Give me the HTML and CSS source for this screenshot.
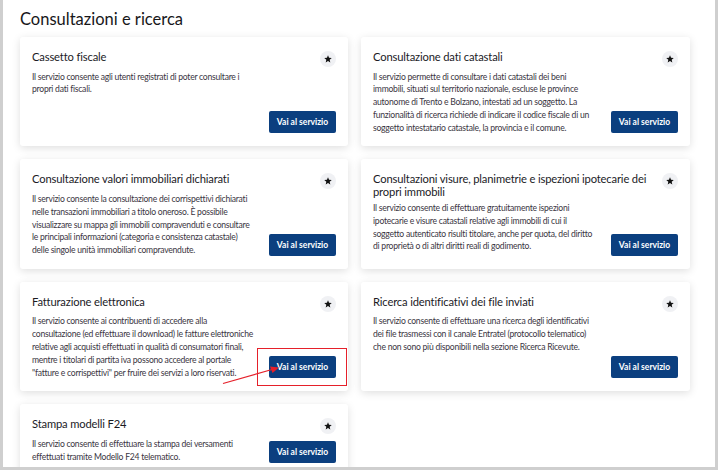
FILE: index.html
```html
<!DOCTYPE html>
<html lang="it">
<head>
<meta charset="utf-8">
<title>Consultazioni e ricerca</title>
<link rel="stylesheet" href="styles.css">
</head>
<body>
<div class="frame">
  <h1 class="heading">Consultazioni e ricerca</h1>
  <div class="grid">
    <div class="card">
      <div class="card-head"><h2 class="card-title">Cassetto fiscale</h2><span class="fav"><svg viewBox="0 0 10 10" width="8" height="8"><polygon points="5,0.4 6.3,3.5 9.7,3.7 7.1,5.9 7.9,9.3 5,7.5 2.1,9.3 2.9,5.9 0.3,3.7 3.7,3.5" fill="#111"/></svg></span></div>
      <div class="card-body"><p class="desc">Il servizio consente agli utenti registrati di poter consultare i propri dati fiscali.</p><a class="btn">Vai al servizio</a></div>
    </div>
    <div class="card">
      <div class="card-head"><h2 class="card-title">Consultazione dati catastali</h2><span class="fav"><svg viewBox="0 0 10 10" width="8" height="8"><polygon points="5,0.4 6.3,3.5 9.7,3.7 7.1,5.9 7.9,9.3 5,7.5 2.1,9.3 2.9,5.9 0.3,3.7 3.7,3.5" fill="#111"/></svg></span></div>
      <div class="card-body"><p class="desc">Il servizio permette di consultare i dati catastali dei beni immobili, situati sul territorio nazionale, escluse le province autonome di Trento e Bolzano, intestati ad un soggetto. La funzionalità di ricerca richiede di indicare il codice fiscale di un soggetto intestatario catastale, la provincia e il comune.</p><a class="btn">Vai al servizio</a></div>
    </div>
    <div class="card">
      <div class="card-head"><h2 class="card-title">Consultazione valori immobiliari dichiarati</h2><span class="fav"><svg viewBox="0 0 10 10" width="8" height="8"><polygon points="5,0.4 6.3,3.5 9.7,3.7 7.1,5.9 7.9,9.3 5,7.5 2.1,9.3 2.9,5.9 0.3,3.7 3.7,3.5" fill="#111"/></svg></span></div>
      <div class="card-body"><p class="desc">Il servizio consente la consultazione dei corrispettivi dichiarati nelle transazioni immobiliari a titolo oneroso. È possibile visualizzare su mappa gli immobili compravenduti e consultare le principali informazioni (categoria e consistenza catastale) delle singole unità immobiliari compravendute.</p><a class="btn">Vai al servizio</a></div>
    </div>
    <div class="card">
      <div class="card-head"><h2 class="card-title">Consultazioni visure, planimetrie e ispezioni ipotecarie dei propri immobili</h2><span class="fav"><svg viewBox="0 0 10 10" width="8" height="8"><polygon points="5,0.4 6.3,3.5 9.7,3.7 7.1,5.9 7.9,9.3 5,7.5 2.1,9.3 2.9,5.9 0.3,3.7 3.7,3.5" fill="#111"/></svg></span></div>
      <div class="card-body"><p class="desc">Il servizio consente di effettuare gratuitamente ispezioni ipotecarie e visure catastali relative agli immobili di cui il soggetto autenticato risulti titolare, anche per quota, del diritto di proprietà o di altri diritti reali di godimento.</p><a class="btn">Vai al servizio</a></div>
    </div>
    <div class="card">
      <div class="card-head"><h2 class="card-title">Fatturazione elettronica</h2><span class="fav"><svg viewBox="0 0 10 10" width="8" height="8"><polygon points="5,0.4 6.3,3.5 9.7,3.7 7.1,5.9 7.9,9.3 5,7.5 2.1,9.3 2.9,5.9 0.3,3.7 3.7,3.5" fill="#111"/></svg></span></div>
      <div class="card-body"><p class="desc">Il servizio consente ai contribuenti di accedere alla consultazione (ed effettuare il download) le fatture elettroniche relative agli acquisti effettuati in qualità di consumatori finali, mentre i titolari di partita iva possono accedere al portale "fatture e corrispettivi" per fruire dei servizi a loro riservati.</p><a class="btn">Vai al servizio</a></div>
      <span class="mark-box"></span>
      <svg class="mark-arrow" viewBox="0 0 60 22" width="60" height="22"><line x1="1" y1="19.5" x2="50" y2="5.5" stroke="#e5202a" stroke-width="1.2"/><polygon points="57,3.5 48,2.5 50.5,9" fill="#e5202a"/></svg>
    </div>
    <div class="card">
      <div class="card-head"><h2 class="card-title">Ricerca identificativi dei file inviati</h2><span class="fav"><svg viewBox="0 0 10 10" width="8" height="8"><polygon points="5,0.4 6.3,3.5 9.7,3.7 7.1,5.9 7.9,9.3 5,7.5 2.1,9.3 2.9,5.9 0.3,3.7 3.7,3.5" fill="#111"/></svg></span></div>
      <div class="card-body"><p class="desc">Il servizio consente di effettuare una ricerca degli identificativi dei file trasmessi con il canale Entratel (protocollo telematico) che non sono più disponibili nella sezione Ricerca Ricevute.</p><a class="btn">Vai al servizio</a></div>
    </div>
    <div class="card">
      <div class="card-head"><h2 class="card-title">Stampa modelli F24</h2><span class="fav"><svg viewBox="0 0 10 10" width="8" height="8"><polygon points="5,0.4 6.3,3.5 9.7,3.7 7.1,5.9 7.9,9.3 5,7.5 2.1,9.3 2.9,5.9 0.3,3.7 3.7,3.5" fill="#111"/></svg></span></div>
      <div class="card-body"><p class="desc">Il servizio consente di effettuare la stampa dei versamenti effettuati tramite Modello F24 telematico.</p><a class="btn">Vai al servizio</a></div>
    </div>
  </div>
</div>
</body>
</html>
```

FILE: styles.css
```css
html, body {
  margin: 0;
  padding: 0;
  background: #ffffff;
}
.frame {
  box-sizing: border-box;
  width: 718px;
  height: 470px;
  overflow: hidden;
  border-left: 3px solid #cfcfcf;
  border-right: 3px solid #cfcfcf;
  border-bottom: 3px solid #cfcfcf;
  padding: 0 25px 0 17px;
  font-family: Lato, "Open Sans", sans-serif;
  color: #1b1b1b;
}
.heading {
  margin: 0;
  padding-top: 7px;
  height: 30px;
  font-size: 16.5px;
  font-weight: 400;
  line-height: 24px;
  color: #17171a;
}
.grid {
  display: grid;
  grid-template-columns: 328px 329px;
  column-gap: 13px;
  row-gap: 13px;
}
.card {
  position: relative;
  display: flex;
  flex-direction: column;
  background: #fff;
  border-radius: 3px;
  box-shadow: 0 2px 9px rgba(0, 0, 0, 0.13);
  padding: 13px 12px 12px 12px;
}
.card-head {
  display: flex;
  align-items: flex-start;
  gap: 10px;
}
.card-title {
  flex: 1;
  margin: 0;
  font-size: 11.2px;
  font-weight: 400;
  line-height: 13px;
  letter-spacing: -0.15px;
  color: #1b1b1f;
}
.fav {
  flex: none;
  margin-top: 1px;
  width: 16px;
  height: 16px;
  border-radius: 50%;
  background: #f0f1f4;
  display: flex;
  align-items: center;
  justify-content: center;
}
.card-body {
  flex: 1;
  display: flex;
  gap: 14.5px;
  margin-top: 3.5px;
}
.desc {
  flex: 1;
  margin: 0;
  font-size: 8.6px;
  line-height: 12.8px;
  letter-spacing: -0.25px;
  color: #3a3542;
}
.btn {
  flex: none;
  align-self: flex-end;
  margin-bottom: 1px;
  width: 67px;
  height: 22px;
  border-radius: 2px;
  background: #0b3f7f;
  color: #fff;
  font-size: 8.5px;
  font-weight: 700;
  display: flex;
  align-items: center;
  justify-content: center;
}
.mark-box {
  position: absolute;
  left: 237px;
  top: 66px;
  width: 88px;
  height: 36px;
  border: 1px solid #e5202a;
}
.mark-arrow {
  position: absolute;
  left: 202px;
  top: 82px;
}
```
